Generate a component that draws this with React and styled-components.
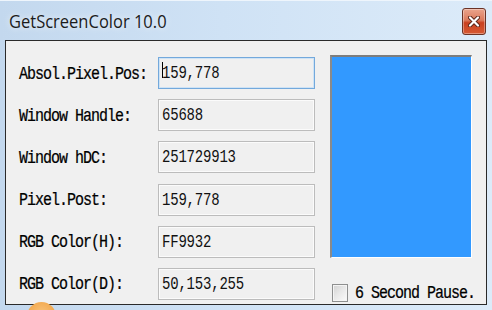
import React from "react";
import styled, { createGlobalStyle } from "styled-components";

const Global = createGlobalStyle`
  html, body { margin: 0; padding: 0; background: #d6e6f6; }
  #root { width: 492px; height: 310px; }
`;

const Window = styled.div`
  position: relative;
  width: 492px;
  height: 310px;
  overflow: hidden;
  display: flex;
  flex-direction: column;
  background: linear-gradient(to right, #c3d8ee 0%, #cfe2f5 45%, #dcebf9 100%);
  box-shadow: inset 0 1px 0 #eef5fc;
`;

const TitleBar = styled.div`
  height: 40px;
  flex: none;
  display: flex;
  align-items: center;
  justify-content: space-between;
  padding: 0 6px 0 9px;
  box-sizing: border-box;
`;

const Title = styled.span`
  font-family: "Open Sans", "Noto Sans", sans-serif;
  font-size: 16.5px;
  color: #1b1b1b;
  display: inline-block;
  transform: scaleY(1.12);
  transform-origin: left center;
  margin-top: 1px;
  text-shadow: 0 0 6px rgba(255, 255, 255, 0.9);
`;

const CloseButton = styled.div`
  width: 24px;
  height: 27px;
  box-sizing: border-box;
  border: 1px solid #6b3326;
  border-radius: 3px;
  background: linear-gradient(to bottom, #eaa48c 0%, #dc7a5c 45%, #c9401f 55%, #d65a34 100%);
  box-shadow: inset 0 0 0 1px rgba(255, 255, 255, 0.35);
  display: flex;
  align-items: center;
  justify-content: center;
  margin-top: 2px;
`;

const Client = styled.div`
  margin: 0 5px;
  height: 265px;
  box-sizing: border-box;
  border: 1px solid #2a2a2a;
  background: #f0f0f0;
  display: flex;
  padding: 14px 13px 0 13px;
`;

const Form = styled.div`
  display: grid;
  grid-template-columns: 139px 157px;
  grid-auto-rows: 32px;
  row-gap: 10.2px;
  padding-top: 2px;
`;

const Label = styled.div`
  display: flex;
  align-items: center;
  padding-top: 2px;
  font-family: "Liberation Mono", monospace;
  font-size: 15px;
  letter-spacing: -1px;
  color: #000;
  white-space: pre;
  -webkit-text-stroke: 0.2px #000;
  span {
    display: inline-block;
    transform: scaleY(1.22);
  }
`;

const Field = styled.div`
  box-sizing: border-box;
  border: 1px solid ${(p) => (p.$focused ? "#73a9dc" : "#bcbcbc")};
  box-shadow: inset 0 0 0 1px ${(p) => (p.$focused ? "#cfe3f5" : "#fbfbfb")};
  background: #f0f0f0;
  padding: 4px 0 0 3px;
  display: flex;
  align-items: flex-start;
  font-family: "Liberation Mono", monospace;
  font-size: 14px;
  letter-spacing: -0.2px;
  color: #111;
  span {
    display: inline-block;
    transform: scaleY(1.3);
    transform-origin: left top;
  }
`;

const Caret = styled.i`
  width: 1px;
  height: 16px;
  background: #000;
  margin-right: -1px;
  flex: none;
`;

const Side = styled.div`
  margin-left: 15px;
  width: 142px;
  display: flex;
  flex-direction: column;
`;

const Swatch = styled.div`
  height: 203px;
  box-sizing: border-box;
  border-top: 2px solid #7d7d7d;
  border-left: 2px solid #8a8a8a;
  border-right: 1px solid #ffffff;
  border-bottom: 1px solid #ffffff;
  background: ${(p) => p.$color};
`;

const CheckRow = styled.label`
  margin-top: 26px;
  display: flex;
  align-items: center;
  gap: 7px;
  font-family: "Liberation Mono", monospace;
  font-size: 15px;
  letter-spacing: -1px;
  color: #000;
  white-space: pre;
  -webkit-text-stroke: 0.2px #000;
  span {
    display: inline-block;
    transform: scaleY(1.22);
  }
`;

const CheckBox = styled.div`
  width: 16px;
  height: 18px;
  box-sizing: border-box;
  border: 1px solid #8e8f8f;
  background: linear-gradient(135deg, #d2d2d2 0%, #e9e9e9 50%, #fbfbfb 100%);
  box-shadow: inset 0 0 0 1px #f4f4f4;
  flex: none;
  margin-left: 2px;
`;

const Blob = styled.div`
  position: absolute;
  left: 27px;
  top: 302px;
  width: 29px;
  height: 29px;
  border-radius: 50%;
  background: radial-gradient(circle at 50% 40%, #f8c27a 0%, #f2a548 70%);
`;

const rows = [
  { label: "Absol.Pixel.Pos:", value: "159,778", focused: true },
  { label: "Window Handle:", value: "65688" },
  { label: "Window hDC:", value: "251729913" },
  { label: "Pixel.Post:", value: "159,778" },
  { label: "RGB Color(H):", value: "FF9932" },
  { label: "RGB Color(D):", value: "50,153,255" },
];

export default function App() {
  return (
    <>
      <Global />
      <Window>
        <TitleBar>
          <Title>GetScreenColor 10.0</Title>
          <CloseButton>
            <svg width="12" height="11" viewBox="0 0 12 11">
              <path d="M2 1.5 L10 9.5 M10 1.5 L2 9.5" stroke="#5a2418" strokeWidth="4" strokeLinecap="round" />
              <path d="M2 1.5 L10 9.5 M10 1.5 L2 9.5" stroke="#ffffff" strokeWidth="2.2" strokeLinecap="round" />
            </svg>
          </CloseButton>
        </TitleBar>
        <Client>
          <Form>
            {rows.map((r) => (
              <React.Fragment key={r.label}>
                <Label>
                  <span>{r.label}</span>
                </Label>
                <Field $focused={r.focused}>
                  {r.focused && <Caret />}
                  <span>{r.value}</span>
                </Field>
              </React.Fragment>
            ))}
          </Form>
          <Side>
            <Swatch $color="#3299ff" />
            <CheckRow>
              <CheckBox />
              <span>6 Second Pause.</span>
            </CheckRow>
          </Side>
        </Client>
        <Blob />
      </Window>
    </>
  );
}
